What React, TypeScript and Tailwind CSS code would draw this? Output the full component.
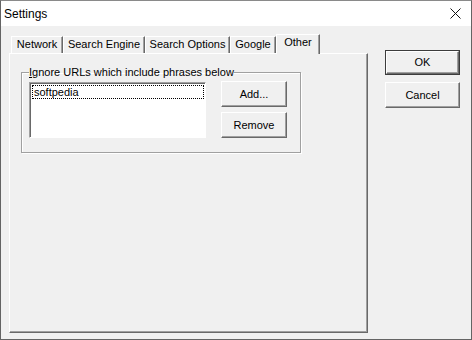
import React from "react";

const font = { fontFamily: '"Liberation Sans", Arial, sans-serif' };

function Btn({ children, w, h, def }: { children: React.ReactNode; w: string; h: string; def?: boolean }) {
  return (
    <div className={`${w} ${h} ${def ? "border border-[#3c3c3c]" : ""} flex`}>
      <div className="flex-1 flex items-center justify-center bg-[#f0f0f0] border-l border-t border-white border-r border-b border-r-[#696969] border-b-[#696969] shadow-[inset_-1px_-1px_0_#a0a0a0] text-[11px] text-black">
        {children}
      </div>
    </div>
  );
}

function Tab({ label, w, active }: { label: string; w: string; active?: boolean }) {
  return (
    <div
      className={`${w} ${active ? "h-[20px] mb-[-1px] z-10" : "h-[17px]"} bg-[#f0f0f0] border-l border-t border-white border-r border-r-[#696969] shadow-[inset_-1px_0_0_#a0a0a0] flex justify-center text-[11px] leading-[15px] text-black`}
    >
      {label}
    </div>
  );
}

export default function App() {
  return (
    <div style={font} className="w-[472px] h-[340px] bg-[#f0f0f0] border border-[#646464] border-t-[#8a8a8a] flex flex-col overflow-hidden select-none">
      <div className="h-[25px] bg-white flex items-center justify-between pl-[3px] pr-[10px] shrink-0">
        <span className="text-[12px] text-black">Settings</span>
        <svg width="11" height="11" viewBox="0 0 11 11">
          <path d="M0.5 0.5L10.5 10.5M10.5 0.5L0.5 10.5" stroke="#111" strokeWidth="1" />
        </svg>
      </div>
      <div className="flex flex-1 pt-[8px] pl-[8px]">
        <div className="flex flex-col w-[359px]">
          <div className="flex items-end h-[19px] pl-[2px] relative">
            <Tab label="Network" w="w-[52px]" />
            <Tab label="Search Engine" w="w-[82px]" />
            <Tab label="Search Options" w="w-[85px]" />
            <Tab label="Google" w="w-[46px]" />
            <Tab label="Other" w="w-[44px]" active />
          </div>
          <div className="h-[280px] border-l border-t border-white border-r border-b border-r-[#696969] border-b-[#696969] shadow-[inset_-1px_-1px_0_#a0a0a0] pl-[11px] pt-[12px]">
            <fieldset className="w-[280px] h-[87px] border border-[#a0a0a0] shadow-[inset_1px_1px_0_white,1px_1px_0_white] pl-[7px] pr-0 m-0 relative">
              <legend className="text-[11px] leading-[13px] text-black px-0 ml-[0px]">
                <span className="underline">I</span>gnore URLs which include phrases below
              </legend>
              <div className="flex mt-[3px]">
                <div className="w-[177px] h-[56px] bg-white border-l border-t border-[#a0a0a0] border-r border-b border-r-white border-b-white shadow-[inset_1px_1px_0_#696969] pl-[2px] pt-[2px] pr-[1px]">
                  <div className="h-[14px] border border-dotted border-black text-[11px] leading-[12px] text-black pl-[1px]">softpedia</div>
                </div>
                <div className="flex flex-col ml-[15px] -mt-[1px] gap-[5px]">
                  <Btn w="w-[66px]" h="h-[26px]">Add...</Btn>
                  <Btn w="w-[66px]" h="h-[26px]">Remove</Btn>
                </div>
              </div>
            </fieldset>
          </div>
        </div>
        <div className="flex flex-col ml-[17px] pt-[16px] gap-[7px]">
          <Btn w="w-[75px]" h="h-[25px]" def>OK</Btn>
          <Btn w="w-[75px]" h="h-[26px]">Cancel</Btn>
        </div>
      </div>
    </div>
  );
}
